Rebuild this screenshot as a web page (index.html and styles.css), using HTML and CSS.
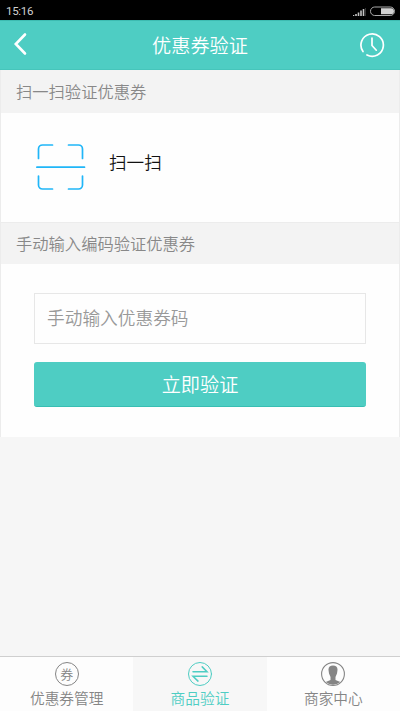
FILE: index.html
```html
<!DOCTYPE html>
<html lang="zh-CN">
<head>
<meta charset="utf-8">
<title>优惠券验证</title>
<link rel="stylesheet" href="styles.css">
</head>
<body>
<div class="status">
  <span class="time">15:16</span>
  <svg width="46" height="12" viewBox="0 0 46 12">
    <path d="M0.500 11V10M3 11V9M5.500 11V7.500M8 11V5.500M10.500 11V4" stroke="#c4c4c4" stroke-width="1.600"/>
    <path d="M12.500 11V3" stroke="#333" stroke-width="1"/>
    <rect x="17.500" y="2" width="24" height="8.500" rx="4.200" fill="none" stroke="#aaa" stroke-width="1"/>
    <path d="M28 3.300H38a2.900 2.900 0 0 1 0 5.900H28z" fill="#d2d2d2"/>
  </svg>
</div>
<header class="header">
  <svg class="back" width="16" height="24" viewBox="0 0 16 24"><path d="M12 2.500L2.800 12L12 21.500" fill="none" stroke="#fff" stroke-width="2.600" stroke-linecap="round"/></svg>
  <h1 class="title">优惠券验证</h1>
  <svg class="history" width="26" height="26" viewBox="0 0 26 26" fill="none" stroke="#fff" stroke-width="1.700" stroke-linecap="round">
    <path d="M4 19.500A11.200 11.200 0 1 1 8 23"/><path d="M13 6v7.500l4.300 4.700"/>
  </svg>
</header>
<main class="content">
  <h2 class="section-title">扫一扫验证优惠券</h2>
  <a class="scan">
    <svg width="50" height="50" viewBox="0.500 0 50 50" fill="none" stroke="#20b6f8" stroke-width="1.700" stroke-linecap="round">
      <path d="M3 15.500V6a4 4 0 0 1 4-4h10M33 2h10a4 4 0 0 1 4 4v9.500M3 33v9a4 4 0 0 0 4 4h10M33 46h10a4 4 0 0 0 4-4v-9M1.400 24.200h47.600"/>
    </svg>
    <span class="scan-label">扫一扫</span>
  </a>
  <h2 class="section-title second">手动输入编码验证优惠券</h2>
  <form class="form">
    <input class="code" type="text" placeholder="手动输入优惠券码">
    <button class="submit" type="button">立即验证</button>
  </form>
</main>
<nav class="tabs">
  <a class="tab"><span class="coupon">券</span><span class="label">优惠券管理</span></a>
  <a class="tab active">
    <svg width="26" height="26" viewBox="0 0 26 26" fill="none" stroke="#4ecdc3" stroke-linecap="round">
      <circle cx="13" cy="13" r="11.500" stroke-width="1"/><path d="M6 10.700h14l-4.800-4.800M20 15.300H6l5 4.800" stroke-width="1.500"/>
    </svg>
    <span class="label">商品验证</span>
  </a>
  <a class="tab">
    <svg width="26" height="26" viewBox="0 0 26 26">
      <circle cx="13" cy="13" r="11.400" fill="none" stroke="#858585" stroke-width="1.100"/>
      <path d="M13 4.500c-3 0-4.700 1.500-4.500 4.500l.5 3.500 1.500 3.500v3l-4.800 2a11.200 11.200 0 0 0 14.600 0l-4.800-2v-3l1.500-3.500.5-3.500C17.700 6 16 4.500 13 4.500z" fill="#858585"/>
    </svg>
    <span class="label">商家中心</span>
  </a>
</nav>
</body>
</html>
```
FILE: styles.css
```css
* { box-sizing: border-box; }
body {
  margin: 0;
  height: 711px;
  display: flex;
  flex-direction: column;
  overflow: hidden;
  background: #f6f6f6;
  font-family: "Noto Sans CJK SC", sans-serif;
  font-weight: 350;
}
h1, h2 { margin: 0; font-weight: 350; }
svg { display: block; flex: none; }
.status {
  height: 20px;
  padding: 1px 1px 0 6px;
  display: flex;
  align-items: center;
  justify-content: space-between;
  background: #000;
}
.time { color: #d0d0d0; font: 400 11.500px/19px Roboto, sans-serif; letter-spacing: -0.300px; padding-top: 1px; }
.header {
  height: 50px;
  padding: 0 15px 0 13px;
  display: grid;
  grid-template-columns: 26px 1fr 26px;
  align-items: center;
  background: #4ecdc3;
  border-top: 1px solid #3dbbb1;
  border-bottom: 1px solid #46c5bb;
}
.back { margin-top: -2px; }
.title { color: #fff; font-size: 19.200px; line-height: 46px; padding: 0 0 0 2px; text-align: center; }
.content { border: solid #ececec; border-width: 0 1px; }
.section-title {
  height: 43px;
  padding: 0 0 0 15px;
  background: #f3f3f3;
  color: #888;
  font-size: 16.300px;
  line-height: 42px;
}
.second { height: 42px; line-height: 40px; border-top: 1px solid #ececec; }
.scan {
  height: 109px;
  padding-left: 35px;
  display: flex;
  align-items: center;
  gap: 23px;
  background: #fefefe;
}
.scan-label { color: #111; font-size: 17.600px; line-height: 26px; margin-top: -12px; }
.form { height: 173px; padding: 29px 33px 30px; background: #fefefe; }
.code {
  display: block;
  width: 100%;
  height: 51px;
  margin-bottom: 18px;
  padding: 0 12px 3px;
  border: 1px solid #e7e7e7;
  border-radius: 0;
  background: #fefefe;
  font: 350 17.700px "Noto Sans CJK SC", sans-serif;
}
.code::placeholder { color: #999; }
.submit {
  display: block;
  width: 100%;
  height: 45px;
  padding: 0;
  border: 0;
  border-bottom: 1px solid #38beb3;
  border-radius: 3px;
  background: #4ecdc3;
  color: #fff;
  font: 350 19.200px "Noto Sans CJK SC", sans-serif;
}
.tabs {
  height: 55px;
  margin-top: auto;
  display: grid;
  grid-template-columns: repeat(3, 1fr);
  border-top: 1px solid #cfcfcf;
}
.tab {
  padding-top: 4px;
  display: flex;
  flex-direction: column;
  align-items: center;
  background: #fdfdfd;
  color: #858585;
}
.active { background: #f7f7f7; color: #4ecdc3; }
.label { font-size: 14.700px; line-height: 22px; }
.coupon {
  width: 24px;
  height: 24px;
  margin: 1px;
  border: 1px solid #858585;
  border-radius: 50%;
  font-size: 13px;
  line-height: 22px;
  text-align: center;
}
```
